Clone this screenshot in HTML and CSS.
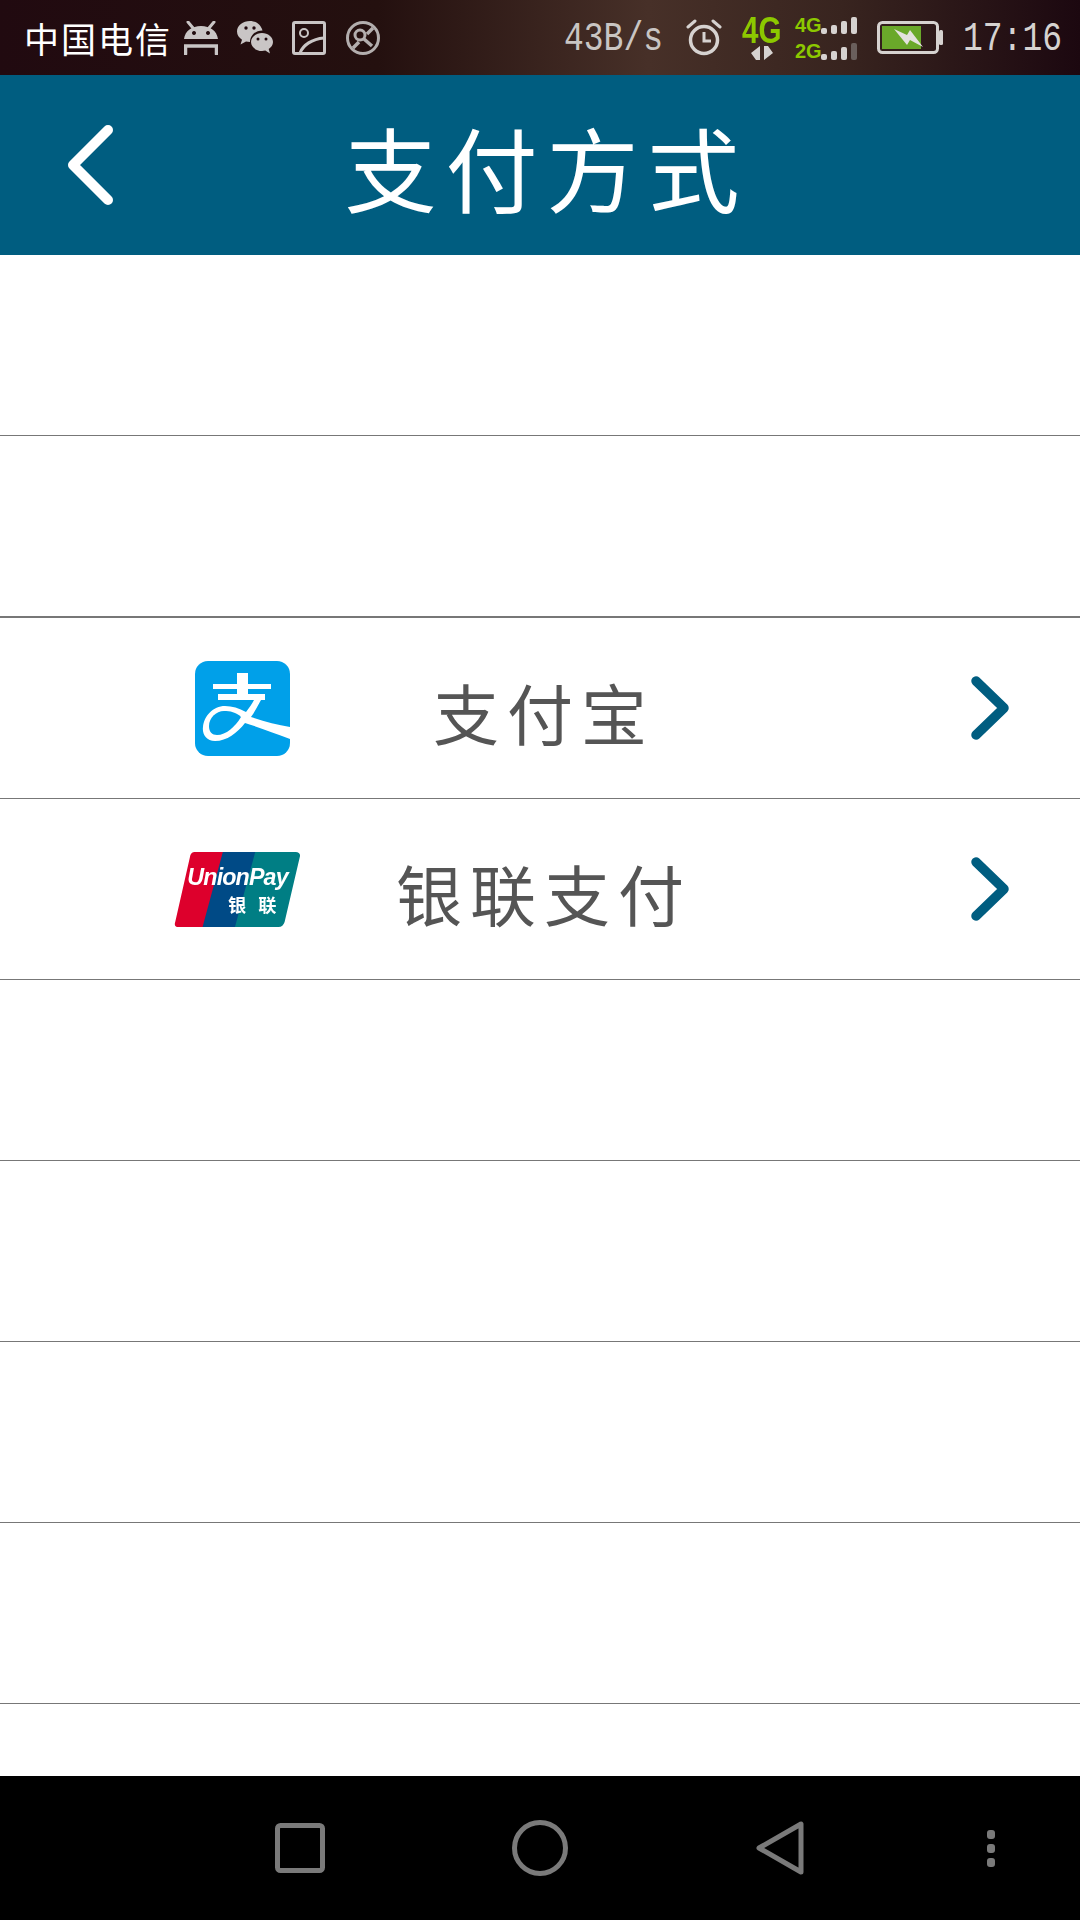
FILE: index.html
```html
<!DOCTYPE html>
<html lang="zh-CN">
  <head>
    <meta charset="UTF-8">
    <meta name="viewport" content="width=device-width, initial-scale=1.0">
    <title>支付方式</title>
    <link rel="stylesheet" href="styles.css">
  </head>

  <body>
    <div class="status-bar">
      <div class="status-left">
        <span class="carrier">中国电信</span>
        <svg class="icon-android" width="34" height="34" viewBox="0 0 34 34">
          <path d="M4 1l5 6M30 1l-5 6" stroke="#c9c5c5" stroke-width="3" stroke-linecap="round" />
          <path fill-rule="evenodd" fill="#c9c5c5" d="M0 18C1 10 8 5 17 5s16 5 17 13zM10 10a2 2 0 1 0 .01 0zM24 10a2 2 0 1 0 .01 0z" />
          <path d="M1.500 33V25H32.500V33" fill="none" stroke="#c9c5c5" stroke-width="3.500" stroke-linecap="round" />
        </svg>
        <svg class="icon-wechat" width="36" height="33" viewBox="0 0 36 33">
          <path fill="#c9c5c5" d="M13 0C6 0 0 4.500 0 10.500c0 3.500 2 6.300 5 8.200L3.500 23.500 9 20.500c1.200.3 2.500.5 4 .5 0-6 5-11.500 12.500-11.500C24 4 19 0 13 0z" />
          <path fill="#c9c5c5" d="M25 12c-6 0-11 4-11 9s5 9 11 9c1.200 0 2.200-.2 3.300-.5L33 32.500l-1.300-4.500c2.600-1.700 4.300-4 4.300-7 0-5-5-9-11-9z" />
          <circle cx="9" cy="7" r="1.700" fill="#21090f" />
          <circle cx="17" cy="7" r="1.700" fill="#21090f" />
          <circle cx="21" cy="18" r="1.500" fill="#21090f" />
          <circle cx="29" cy="18" r="1.500" fill="#21090f" />
        </svg>
        <svg class="icon-picture" width="34" height="34" viewBox="0 0 34 34">
          <rect x="1.500" y="1.500" width="31" height="31" rx="1.500" fill="none" stroke="#c9c5c5" stroke-width="3" />
          <circle cx="12" cy="12" r="4" fill="none" stroke="#c9c5c5" stroke-width="2" />
          <path d="M8 32C11 24 20 18 32 17" fill="none" stroke="#c9c5c5" stroke-width="3" />
        </svg>
        <svg class="icon-block" width="34" height="34" viewBox="0 0 34 34">
          <circle cx="17" cy="17" r="15.500" fill="none" stroke="#b3aeae" stroke-width="3" />
          <circle cx="14" cy="14" r="5" fill="none" stroke="#b3aeae" stroke-width="3" />
          <path d="M18 18l8 7M7 27l6-6M27 7l-6 6" stroke="#b3aeae" stroke-width="3.500" />
        </svg>
      </div>

      <div class="status-right">
        <span class="speed">43B/s</span>
        <svg class="icon-alarm" width="36" height="37" viewBox="0 0 36 37">
          <circle cx="18" cy="21" r="13.500" fill="none" stroke="#d6d2d0" stroke-width="3.500" />
          <path d="M18 13v9h7" fill="none" stroke="#d6d2d0" stroke-width="3" />
          <path d="M2 8l7-6M34 8l-7-6" stroke="#d6d2d0" stroke-width="3" stroke-linecap="round" />
        </svg>
        <div class="net-main">
          <span class="net-label">4G</span>
          <svg width="22" height="14" viewBox="0 0 22 14">
            <path fill="#d6d2d0" d="M0 7L9 0V14H5zM13 0H17L22 7L13 14z" />
          </svg>
        </div>
        <div class="net-sims">
          <div class="sim">
            <span class="sim-label">4G</span>
            <div class="sim-bars">
              <i class="bar bar-1"></i><i class="bar bar-2"></i><i class="bar bar-3"></i><i class="bar bar-4"></i>
            </div>
          </div>
          <div class="sim">
            <span class="sim-label">2G</span>
            <div class="sim-bars">
              <i class="bar bar-1"></i><i class="bar bar-2"></i><i class="bar bar-3"></i><i class="bar bar-4 dim"></i>
            </div>
          </div>
        </div>
        <svg class="icon-battery" width="66" height="33" viewBox="0 0 66 33">
          <rect x="1.500" y="1.500" width="59" height="30" rx="4" fill="none" stroke="#d6d2d0" stroke-width="3" />
          <rect x="5" y="5" width="39" height="23" fill="#6aa82a" />
          <rect x="62" y="9" width="4" height="15" rx="1.500" fill="#d6d2d0" />
          <path fill="#e4e2df" d="M17 8L30 14 33 9 46 26 33 19 30 24z" />
        </svg>
        <span class="clock">17:16</span>
      </div>
    </div>

    <header class="title-bar">
      <svg class="back" width="46" height="80" viewBox="0 0 46 80">
        <path d="M41 5L6 40L41 75" fill="none" stroke="#fff" stroke-width="10" stroke-linejoin="round" stroke-linecap="round" />
      </svg>
      <h1 class="title">支付方式</h1>
    </header>

    <main class="pay-list">
      <div class="pay-row"></div>
      <div class="pay-row pay-row-thick"></div>

      <div class="pay-row">
        <div class="pay-logo">
          <svg class="logo-alipay" width="95" height="95" viewBox="0 0 95 95">
            <rect width="95" height="95" rx="13" fill="#00a0e9" />
            <path fill="#fff" d="M42 12H53V23H76V28H53V33H70V39H66C62 46 59 52 56 56C68 60 82 64 95 66V78C79 72 63 66 50 62C42 72 32 80 20 80C11 80 7 73 8 66C9 55 18 45 30 45C37 45 44 47 51 51C54 47 57 43 59 39H23V33H42V28H18V23H42z" />
            <path fill="#00a0e9" d="M46 56C41 51 35 50 29 50C21 50 14 57 14 65C14 71 17 74 22 74C31 74 40 66 46 56z" />
          </svg>
        </div>
        <span class="pay-name">支付宝</span>
        <svg class="pay-arrow" width="38" height="64" viewBox="0 0 38 64">
          <path d="M5 5L33 32L5 59" fill="none" stroke="#005d80" stroke-width="9.500" stroke-linejoin="round" stroke-linecap="round" />
        </svg>
      </div>

      <div class="pay-row">
        <div class="pay-logo">
          <svg class="logo-unionpay" width="128" height="79" viewBox="0 0 126 78">
            <path d="M21 2H52L32 76H5C2 76 1 74 2 71L17 5C18 3 19 2 21 2z" fill="#dd002c" />
            <path d="M49 2H84L64 76H29z" fill="#004a86" />
            <path d="M81 2H121C124 2 126 4 125 7L110 71C109 74 107 76 104 76H61z" fill="#007e84" />
            <text class="unionpay-en" x="14" y="35" textLength="100">UnionPay</text>
            <text class="unionpay-cn" x="54" y="61" textLength="48">银联</text>
          </svg>
        </div>
        <span class="pay-name">银联支付</span>
        <svg class="pay-arrow" width="38" height="64" viewBox="0 0 38 64">
          <path d="M5 5L33 32L5 59" fill="none" stroke="#005d80" stroke-width="9.500" stroke-linejoin="round" stroke-linecap="round" />
        </svg>
      </div>

      <div class="pay-row"></div>
      <div class="pay-row"></div>
      <div class="pay-row"></div>
      <div class="pay-row"></div>
      <div class="pay-row pay-row-last"></div>
    </main>

    <nav class="nav-bar">
      <svg class="nav-square" width="50" height="50" viewBox="0 0 50 50">
        <rect x="2.500" y="2.500" width="45" height="45" rx="3" fill="none" stroke="#7a7a7a" stroke-width="5" />
      </svg>
      <svg class="nav-circle" width="56" height="56" viewBox="0 0 56 56">
        <circle cx="28" cy="28" r="25.500" fill="none" stroke="#7a7a7a" stroke-width="5" />
      </svg>
      <svg class="nav-back" width="48" height="54" viewBox="0 0 48 54">
        <path d="M45 3V51L3 27z" fill="none" stroke="#7a7a7a" stroke-width="5" stroke-linejoin="round" />
      </svg>
      <div class="nav-dots"><i></i><i></i><i></i></div>
    </nav>
  </body>
</html>
```

FILE: styles.css
```css
* {
  box-sizing: border-box;
}

html,
body {
  margin: 0;
  padding: 0;
}

body {
  display: flex;
  flex-direction: column;
  width: 1080px;
  height: 1920px;
  overflow: hidden;
  background-color: #ffffff;
  font-family: "Noto Sans CJK SC", "Noto Sans", sans-serif;
}

.status-bar {
  display: flex;
  align-items: center;
  justify-content: space-between;
  flex: none;
  height: 75px;
  padding: 0 20px 0 24px;
  background: linear-gradient(90deg, #210a10 0%, #24100f 35%, #473028 60%, #38241f 78%, #1c0810 100%);
}

.status-left {
  display: flex;
  align-items: center;
}

.carrier {
  width: 146px;
  font-size: 35px;
  font-weight: 400;
  letter-spacing: 2px;
  white-space: nowrap;
  color: #ffffff;
}

.icon-android {
  margin-left: 14px;
}

.icon-wechat {
  margin-left: 19px;
}

.icon-picture {
  margin-left: 19px;
}

.icon-block {
  margin-left: 20px;
}

.status-right {
  display: flex;
  align-items: center;
}

.speed {
  width: 100px;
  font-family: "Liberation Mono", monospace;
  font-size: 33px;
  white-space: nowrap;
  color: #c9c5c3;
  transform: translateY(2px) scaleY(1.25);
}

.icon-alarm {
  margin-left: 22px;
  margin-top: -1px;
}

.net-main {
  display: flex;
  flex-direction: column;
  align-items: center;
  width: 40px;
  margin-left: 20px;
}

.net-label {
  font-family: "Liberation Sans", sans-serif;
  font-size: 37px;
  font-weight: 700;
  line-height: 31px;
  color: #8cc800;
  transform: scaleX(0.8);
}

.net-sims {
  display: flex;
  flex-direction: column;
  gap: 8px;
  width: 60px;
  margin-left: 13px;
}

.sim {
  display: flex;
  align-items: flex-end;
  height: 18px;
}

.sim-label {
  width: 26px;
  font-family: "Liberation Sans", sans-serif;
  font-size: 20px;
  font-weight: 700;
  line-height: 18px;
  color: #8cc800;
}

.sim-bars {
  display: flex;
  align-items: flex-end;
  gap: 4px;
  height: 18px;
}

.bar {
  display: block;
  width: 6px;
  border-radius: 2px;
  background-color: #d6d2d0;
}

.bar-1 {
  height: 6px;
}

.bar-2 {
  height: 9px;
}

.bar-3 {
  height: 13px;
}

.bar-4 {
  height: 17px;
}

.bar.dim {
  background-color: #6a5f5c;
}

.icon-battery {
  margin-left: 22px;
}

.clock {
  width: 97px;
  margin-left: 20px;
  font-family: "Liberation Mono", monospace;
  font-size: 33px;
  white-space: nowrap;
  color: #d6d2d0;
  transform: translateY(2px) scaleY(1.25);
}

.title-bar {
  display: flex;
  align-items: center;
  justify-content: center;
  flex: none;
  position: relative;
  height: 180px;
  background-color: #005d80;
}

.back {
  position: absolute;
  left: 67px;
  top: 50px;
}

.title {
  margin: 0;
  font-size: 92px;
  font-weight: 400;
  letter-spacing: 9px;
  text-indent: 13px;
  color: #ffffff;
}

.pay-list {
  display: flex;
  flex: 1;
  flex-direction: column;
}

.pay-row {
  display: grid;
  grid-template-columns: 1fr auto 1fr;
  align-items: center;
  flex: none;
  height: 181px;
  padding-right: 71px;
  border-bottom: 1px solid #777777;
}

.pay-row-thick {
  height: 182px;
  border-bottom-width: 2px;
}

.pay-row-last {
  flex: 1;
  border-bottom: none;
}

.pay-logo {
  display: flex;
  align-items: center;
}

.logo-alipay {
  margin-left: 195px;
}

.logo-unionpay {
  margin-left: 173px;
  filter: blur(0.6px);
}

.unionpay-en {
  font-family: "Liberation Sans", sans-serif;
  font-size: 23px;
  font-style: italic;
  font-weight: 700;
  fill: #ffffff;
}

.unionpay-cn {
  font-size: 18px;
  font-weight: 700;
  fill: #ffffff;
}

.pay-name {
  margin-left: 79px;
  padding-top: 6px;
  font-size: 66px;
  font-weight: 400;
  letter-spacing: 8px;
  white-space: nowrap;
  color: #555555;
}

.pay-arrow {
  justify-self: end;
}

.nav-bar {
  display: flex;
  align-items: center;
  flex: none;
  height: 144px;
  padding-left: 275px;
  background-color: #000000;
}

.nav-circle {
  margin-left: 187px;
}

.nav-back {
  margin-left: 188px;
}

.nav-dots {
  display: flex;
  flex-direction: column;
  gap: 5px;
  margin-left: 183px;
}

.nav-dots i {
  display: block;
  width: 8px;
  height: 9px;
  border-radius: 3px;
  background-color: #7a7a7a;
}
```
